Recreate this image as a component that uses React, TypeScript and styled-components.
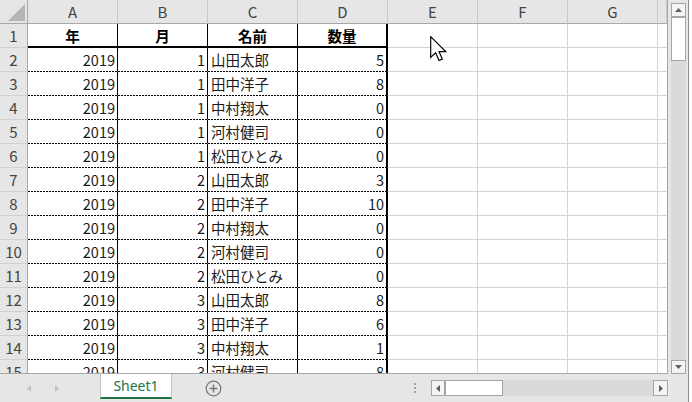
import { FC } from 'react';
import styled, { createGlobalStyle, css } from 'styled-components';

const GlobalStyle = createGlobalStyle`
  html, body {
    margin: 0;
    padding: 0;
    background: #ffffff;
  }
  * {
    box-sizing: border-box;
  }
`

type Row = [number, number, string, number];

const rows: Row[] = [
  [2019, 1, '山田太郎', 5],
  [2019, 1, '田中洋子', 8],
  [2019, 1, '中村翔太', 0],
  [2019, 1, '河村健司', 0],
  [2019, 1, '松田ひとみ', 0],
  [2019, 2, '山田太郎', 3],
  [2019, 2, '田中洋子', 10],
  [2019, 2, '中村翔太', 0],
  [2019, 2, '河村健司', 0],
  [2019, 2, '松田ひとみ', 0],
  [2019, 3, '山田太郎', 8],
  [2019, 3, '田中洋子', 6],
  [2019, 3, '中村翔太', 1],
  [2019, 3, '河村健司', 8],
];

const letters = ['A', 'B', 'C', 'D', 'E', 'F', 'G'];
const headings = ['年', '月', '名前', '数量'];

const FONT = `"Noto Sans CJK JP", "Noto Sans", sans-serif`;

const Window = styled.div`
  display: flex;
  width: 692px;
  height: 402px;
  overflow: hidden;
`

const Main = styled.div`
  display: flex;
  flex-direction: column;
  width: 688px;
  background: #e6e6e6;
`

const EdgeStrip = styled.div`
  width: 4px;
  border-left: 1px solid #8c8c8c;
  background: #ffffff;
`

const Workspace = styled.div`
  display: flex;
  height: 374px;
`

const Sheet = styled.div`
  position: relative;
  width: 668px;
  height: 374px;
  overflow: hidden;
  background: #ffffff;
  border-right: 1px solid #a8a8a8;
  border-bottom: 1px solid #a8a8a8;
  font-family: ${FONT};
`

const GridRow = styled.div`
  display: grid;
  grid-template-columns: 28px repeat(7, 90px) 1fr;
  height: 24px;
`

const HeadCell = styled.div`
  display: flex;
  align-items: center;
  justify-content: center;
  background: #e6e6e6;
  border-right: 1px solid #c9c9c9;
  border-bottom: 1px solid #a8a8a8;
  color: #444444;
  font-size: 15px;
`

const Corner = styled(HeadCell)`
  border-right-color: #a8a8a8;
`

const RowHead = styled.div`
  display: flex;
  align-items: center;
  justify-content: center;
  background: #e6e6e6;
  border-right: 1px solid #a8a8a8;
  border-bottom: 1px solid #d0d0d0;
  color: #444444;
  font-size: 15px;
`

type CellProps = {
  $align?: 'left' | 'right' | 'center';
  $edge?: 'none' | 'thin' | 'thick';
  $rule?: 'grid' | 'dot' | 'head';
  $bold?: boolean;
};

const Cell = styled.div<CellProps>`
  display: flex;
  align-items: center;
  justify-content: ${p => p.$align === 'right' ? 'flex-end' : p.$align === 'center' ? 'center' : 'flex-start'};
  padding: 0 ${p => p.$align === 'right' ? '2px' : '0'} 0 ${p => p.$align === 'left' ? '3px' : '0'};
  font-size: 14.5px;
  font-weight: ${p => p.$bold ? 700 : 400};
  color: ${p => p.$bold ? '#000000' : '#1c1c1c'};
  white-space: nowrap;
  overflow: hidden;
  border-right: 1px solid #d4d4d4;
  border-bottom: 1px solid #d4d4d4;
  ${p => p.$edge === 'thin' && css`border-right: 1px solid #000000;`}
  ${p => p.$edge === 'thick' && css`border-right: 2px solid #000000;`}
  ${p => p.$rule === 'dot' && css`
    border-bottom: 1px solid transparent;
    background-image: repeating-linear-gradient(to right, #000000 0 2px, transparent 2px 3px);
    background-size: 100% 1px;
    background-position: left bottom;
    background-repeat: no-repeat;
    background-origin: border-box;
  `}
  ${p => p.$rule === 'head' && css`border-bottom: 2px solid #000000;`}
`

const Tail = styled.div`
  border-bottom: 1px solid #d4d4d4;
`

const Cursor = styled.svg`
  position: absolute;
  left: 430px;
  top: 36px;
`

const VScroll = styled.div`
  display: flex;
  flex-direction: column;
  width: 20px;
  padding: 3px 2px 0 3px;
`

const ScrollButton = styled.div<{ $w?: number; $h?: number }>`
  display: flex;
  align-items: center;
  justify-content: center;
  width: ${p => p.$w ?? 15}px;
  height: ${p => p.$h ?? 14}px;
  flex: none;
  background: #f4f4f4;
  border: 1px solid #a6a6a6;
`

const VTrack = styled.div`
  flex: 1;
  background: #dadada;
`

const VThumb = styled.div`
  height: 44px;
  background: #ffffff;
  border: 1px solid #a6a6a6;
`

const TabBar = styled.div`
  display: flex;
  align-items: center;
  height: 28px;
`

const NavGroup = styled.div`
  display: flex;
  align-items: center;
  gap: 24px;
  width: 100px;
  padding-left: 27px;
`

const SheetTab = styled.div`
  align-self: flex-start;
  display: flex;
  align-items: center;
  justify-content: center;
  width: 72px;
  height: 25px;
  background: #ffffff;
  border-left: 1px solid #c3c3c3;
  border-right: 1px solid #c3c3c3;
  border-bottom: 2px solid #217346;
  color: #217346;
  font-family: "Noto Sans", sans-serif;
  font-size: 14px;
  padding-bottom: 1px;
`

const AddButton = styled.svg`
  margin-left: 33px;
`

const Dots = styled.div`
  display: flex;
  flex-direction: column;
  gap: 2px;
  margin-left: auto;
  margin-right: 15px;
`

const Dot = styled.span`
  width: 2px;
  height: 2px;
  background: #a0a0a0;
`

const HScroll = styled.div`
  display: flex;
  width: 237px;
  height: 16px;
  margin-right: 20px;
`

const HTrack = styled.div`
  flex: 1;
  display: flex;
  background: #dadada;
`

const HThumb = styled.div`
  width: 58px;
  background: #ffffff;
  border: 1px solid #a6a6a6;
`

const Arrow: FC<{ dir: 'up' | 'down' | 'left' | 'right'; color?: string }> = ({ dir, color = '#5f5f5f' }) => {
  const pts = {
    up: '0,4 7,4 3.5,0',
    down: '0,0 7,0 3.5,4',
    left: '4,0 4,7 0,3.5',
    right: '0,0 0,7 4,3.5',
  }[dir];
  const vertical = dir === 'up' || dir === 'down';
  return (
    <svg width={vertical ? 7 : 4} height={vertical ? 4 : 7} viewBox={vertical ? '0 0 7 4' : '0 0 4 7'}>
      <polygon points={pts} fill={color} />
    </svg>
  )
}

const App: FC = () => {
  return (
    <>
      <GlobalStyle />
      <Window>
        <Main>
          <Workspace>
            <Sheet>
              <GridRow>
                <Corner>
                  <svg width="27" height="23" viewBox="0 0 27 23">
                    <polygon points="8,21 25,21 25,4" fill="#b5b5b5" />
                  </svg>
                </Corner>
                {letters.map(l => <HeadCell key={l}>{l}</HeadCell>)}
                <HeadCell />
              </GridRow>

              <GridRow>
                <RowHead>1</RowHead>
                {headings.map((h, i) => (
                  <Cell key={h} $align="center" $bold $rule="head" $edge={i === 3 ? 'thick' : 'thin'}>{h}</Cell>
                ))}
                <Cell />
                <Cell />
                <Cell />
                <Tail />
              </GridRow>

              {rows.map((r, i) => (
                <GridRow key={i}>
                  <RowHead>{i + 2}</RowHead>
                  <Cell $align="right" $rule="dot" $edge="thin">{r[0]}</Cell>
                  <Cell $align="right" $rule="dot" $edge="thin">{r[1]}</Cell>
                  <Cell $align="left" $rule="dot" $edge="thin">{r[2]}</Cell>
                  <Cell $align="right" $rule="dot" $edge="thick">{r[3]}</Cell>
                  <Cell />
                  <Cell />
                  <Cell />
                  <Tail />
                </GridRow>
              ))}

              <Cursor width="17" height="26" viewBox="0 0 13 20">
                <path d="M0.5 0.5 V16.5 L4.3 12.9 L6.9 18.9 L9.4 17.8 L6.9 12 L12 12 Z" fill="#ffffff" stroke="#000000" strokeWidth="0.9" strokeLinejoin="miter" />
              </Cursor>
            </Sheet>

            <VScroll>
              <ScrollButton><Arrow dir="up" /></ScrollButton>
              <VTrack>
                <VThumb />
              </VTrack>
              <ScrollButton><Arrow dir="down" /></ScrollButton>
            </VScroll>
          </Workspace>

          <TabBar>
            <NavGroup>
              <Arrow dir="left" color="#c2c2c2" />
              <Arrow dir="right" color="#c2c2c2" />
            </NavGroup>
            <SheetTab>Sheet1</SheetTab>
            <AddButton width="17" height="17" viewBox="0 0 17 17">
              <circle cx="8.5" cy="8.5" r="7.3" fill="none" stroke="#767676" strokeWidth="1.2" />
              <path d="M8.5 4.5 V12.5 M4.5 8.5 H12.5" stroke="#767676" strokeWidth="1.4" />
            </AddButton>
            <Dots>
              <Dot />
              <Dot />
              <Dot />
            </Dots>
            <HScroll>
              <ScrollButton $w={14} $h={16}><Arrow dir="left" /></ScrollButton>
              <HTrack>
                <HThumb />
              </HTrack>
              <ScrollButton $w={15} $h={16}><Arrow dir="right" /></ScrollButton>
            </HScroll>
          </TabBar>
        </Main>
        <EdgeStrip />
      </Window>
    </>
  )
}

export default App;
